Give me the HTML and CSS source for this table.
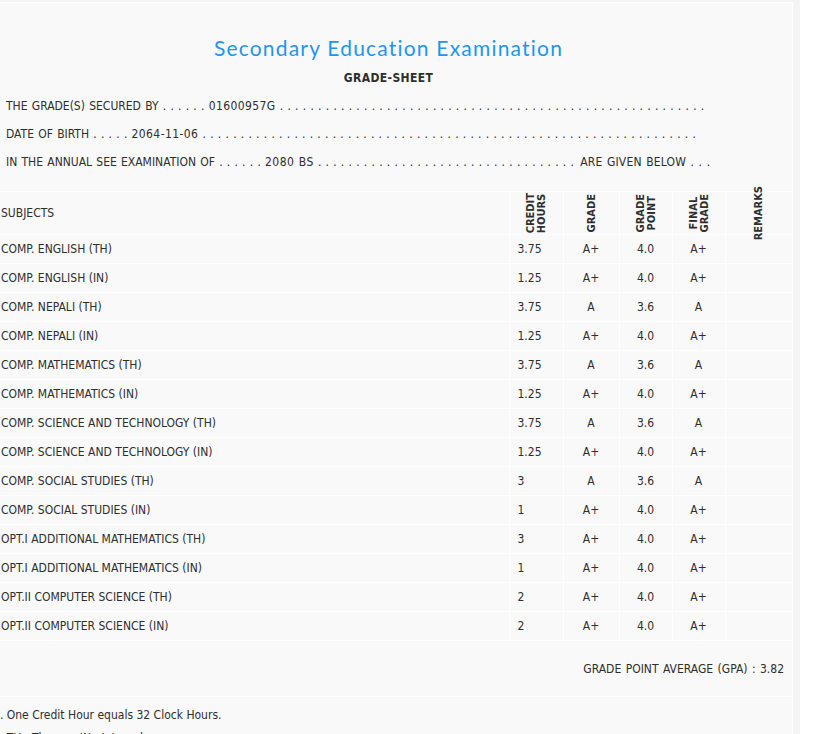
FILE: index.html
```html
<!DOCTYPE html>
<html>
<head>
<meta charset="utf-8">
<title>Grade Sheet</title>
<link rel="stylesheet" href="styles.css">
</head>
<body>
<div class="wrap">
  <div class="panel">
    <h1 class="title">Secondary Education Examination</h1>
    <div class="subtitle">GRADE-SHEET</div>
    <div class="info">
      <p class="info-line">THE GRADE(S) SECURED BY . . . . . . <span class="val">01600957G</span> . . . . . . . . . . . . . . . . . . . . . . . . . . . . . . . . . . . . . . . . . . . . . . . . . . . . . . . .</p>
      <p class="info-line">DATE OF BIRTH . . . . . <span class="val">2064-11-06</span> . . . . . . . . . . . . . . . . . . . . . . . . . . . . . . . . . . . . . . . . . . . . . . . . . . . . . . . . . . . . . . . . .</p>
      <p class="info-line">IN THE ANNUAL SEE EXAMINATION OF . . . . . . <span class="val">2080 BS</span> . . . . . . . . . . . . . . . . . . . . . . . . . . . . . . . . . . <span class="tail">ARE GIVEN BELOW . . .</span></p>
    </div>
    <table class="grades">
      <colgroup>
        <col class="c-subj"><col class="c-credit"><col class="c-grade"><col class="c-point"><col class="c-final"><col class="c-rem">
      </colgroup>
      <thead>
        <tr class="head-row">
          <th class="subj">SUBJECTS</th>
          <th><div class="vbox"><span class="vtext">CREDIT<br>HOURS</span></div></th>
          <th><div class="vbox"><span class="vtext">GRADE</span></div></th>
          <th><div class="vbox"><span class="vtext">GRADE<br>POINT</span></div></th>
          <th><div class="vbox"><span class="vtext">FINAL<br>GRADE</span></div></th>
          <th class="last"><div class="vbox"><span class="vtext">REMARKS</span></div></th>
        </tr>
      </thead>
      <tbody>
        <tr><td class="subj">COMP. ENGLISH (TH)</td><td class="credit">3.75</td><td class="mid">A+</td><td class="mid">4.0</td><td class="mid">A+</td><td class="last"></td></tr>
        <tr><td class="subj">COMP. ENGLISH (IN)</td><td class="credit">1.25</td><td class="mid">A+</td><td class="mid">4.0</td><td class="mid">A+</td><td class="last"></td></tr>
        <tr><td class="subj">COMP. NEPALI (TH)</td><td class="credit">3.75</td><td class="mid">A</td><td class="mid">3.6</td><td class="mid">A</td><td class="last"></td></tr>
        <tr><td class="subj">COMP. NEPALI (IN)</td><td class="credit">1.25</td><td class="mid">A+</td><td class="mid">4.0</td><td class="mid">A+</td><td class="last"></td></tr>
        <tr><td class="subj">COMP. MATHEMATICS (TH)</td><td class="credit">3.75</td><td class="mid">A</td><td class="mid">3.6</td><td class="mid">A</td><td class="last"></td></tr>
        <tr><td class="subj">COMP. MATHEMATICS (IN)</td><td class="credit">1.25</td><td class="mid">A+</td><td class="mid">4.0</td><td class="mid">A+</td><td class="last"></td></tr>
        <tr><td class="subj">COMP. SCIENCE AND TECHNOLOGY (TH)</td><td class="credit">3.75</td><td class="mid">A</td><td class="mid">3.6</td><td class="mid">A</td><td class="last"></td></tr>
        <tr><td class="subj">COMP. SCIENCE AND TECHNOLOGY (IN)</td><td class="credit">1.25</td><td class="mid">A+</td><td class="mid">4.0</td><td class="mid">A+</td><td class="last"></td></tr>
        <tr><td class="subj">COMP. SOCIAL STUDIES (TH)</td><td class="credit">3</td><td class="mid">A</td><td class="mid">3.6</td><td class="mid">A</td><td class="last"></td></tr>
        <tr><td class="subj">COMP. SOCIAL STUDIES (IN)</td><td class="credit">1</td><td class="mid">A+</td><td class="mid">4.0</td><td class="mid">A+</td><td class="last"></td></tr>
        <tr><td class="subj">OPT.I ADDITIONAL MATHEMATICS (TH)</td><td class="credit">3</td><td class="mid">A+</td><td class="mid">4.0</td><td class="mid">A+</td><td class="last"></td></tr>
        <tr><td class="subj">OPT.I ADDITIONAL MATHEMATICS (IN)</td><td class="credit">1</td><td class="mid">A+</td><td class="mid">4.0</td><td class="mid">A+</td><td class="last"></td></tr>
        <tr><td class="subj">OPT.II COMPUTER SCIENCE (TH)</td><td class="credit">2</td><td class="mid">A+</td><td class="mid">4.0</td><td class="mid">A+</td><td class="last"></td></tr>
        <tr><td class="subj">OPT.II COMPUTER SCIENCE (IN)</td><td class="credit">2</td><td class="mid">A+</td><td class="mid">4.0</td><td class="mid">A+</td><td class="last"></td></tr>
      </tbody>
      <tfoot>
        <tr><td class="gpa" colspan="6">GRADE POINT AVERAGE (GPA) : 3.82</td></tr>
        <tr>
          <td class="notes" colspan="6">
            <ol class="note-list">
              <li>One Credit Hour equals 32 Clock Hours.</li>
              <li>TH : Theory&nbsp;&nbsp; IN : Internal</li>
            </ol>
          </td>
        </tr>
      </tfoot>
    </table>
  </div>
</div>
</body>
</html>
```
FILE: styles.css
```css
html, body {
  margin: 0;
  padding: 0;
  background: #ffffff;
}
body {
  font-family: "DejaVu Sans Condensed", "DejaVu Sans", sans-serif;
  font-size: 12px;
  color: #2e2e2e;
  overflow: hidden;
}
.wrap {
  width: 809px;
  margin-left: -16px;
  padding: 2px 7px 0 0;
  background: #f4f4f4;
  min-height: 100vh;
}
.panel {
  border: 1px solid #ffffff;
  border-bottom: none;
  background: #f9f9f9;
  min-height: 760px;
}
.title {
  margin: 32px 0 0 0;
  text-align: center;
  font-family: "Lato", "Open Sans", sans-serif;
  font-weight: 400;
  font-size: 21px;
  line-height: 26px;
  letter-spacing: 1.2px;
  color: #1e96f0;
}
.subtitle {
  margin-top: 7px;
  text-align: center;
  font-weight: bold;
  line-height: 20px;
  letter-spacing: 0.4px;
}
.info {
  margin: 4px 0 15px 21px;
}
.info-line {
  margin: 0;
  line-height: 28px;
  white-space: nowrap;
  word-spacing: 0.8px;
}
.val {
  letter-spacing: 0.4px;
}
.tail {
  letter-spacing: 0.2px;
  margin-left: 2px;
}
.grades {
  width: 807px;
  border-collapse: collapse;
  table-layout: fixed;
}
.c-subj { width: 524px; }
.c-credit { width: 54px; }
.c-grade { width: 56px; }
.c-point { width: 53px; }
.c-final { width: 53px; }
.c-rem { width: 67px; }
.grades th,
.grades td {
  border: 1px solid #ffffff;
  padding: 0;
  font-weight: normal;
  vertical-align: middle;
}
.grades .last { border-right: none; }
.grades .subj {
  text-align: left;
  padding-left: 16px;
  border-left: none;
}
.head-row th { height: 42px; }
.vbox {
  height: 42px;
  display: flex;
  align-items: center;
  justify-content: center;
}
.vtext {
  writing-mode: vertical-rl;
  transform: rotate(180deg);
  font-weight: bold;
  font-size: 11px;
  line-height: 11px;
  white-space: nowrap;
}
.grades tbody td { height: 28px; }
.credit { padding-left: 8px !important; }
.mid { text-align: center; }
.gpa {
  height: 55px;
  text-align: right;
  padding-right: 8px !important;
  word-spacing: 1px;
  border-left: none !important;
  border-right: none !important;
}
.notes {
  vertical-align: top !important;
  border-left: none !important;
  border-right: none !important;
  border-bottom: none !important;
}
.note-list {
  margin: 0;
  padding: 7px 0 0 8px;
  list-style: none;
  counter-reset: n;
}
.note-list li {
  line-height: 23px;
  counter-increment: n;
}
.note-list li::before {
  content: counter(n) ". ";
}
```
